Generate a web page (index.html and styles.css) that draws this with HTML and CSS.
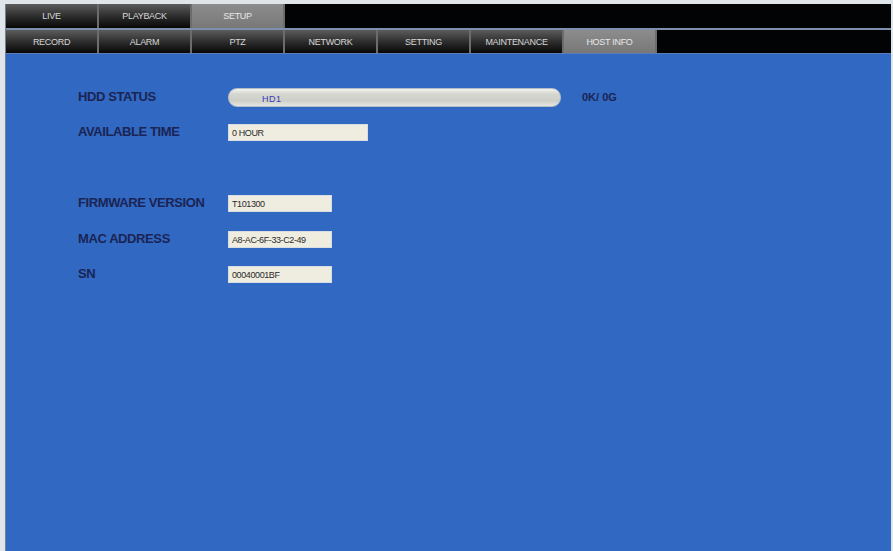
FILE: index.html
```html
<!DOCTYPE html>
<html>
<head>
<meta charset="utf-8">
<title>Host Info</title>
<link rel="stylesheet" href="styles.css">
</head>
<body>
<div class="frame">
  <div class="tabbar">
    <div class="tab">LIVE</div>
    <div class="tab">PLAYBACK</div>
    <div class="tab active">SETUP</div>
  </div>
  <div class="tabsep"></div>
  <div class="tabbar sub">
    <div class="tab">RECORD</div>
    <div class="tab">ALARM</div>
    <div class="tab">PTZ</div>
    <div class="tab">NETWORK</div>
    <div class="tab">SETTING</div>
    <div class="tab">MAINTENANCE</div>
    <div class="tab active">HOST INFO</div>
  </div>
  <div class="content">
    <div class="row r-hdd">
      <div class="label">HDD STATUS</div>
      <div class="hddbar"><span class="hddname">HD1</span></div>
      <div class="cap">0K/ 0G</div>
    </div>
    <div class="row r-avail">
      <div class="label">AVAILABLE TIME</div>
      <div class="field wide">0 HOUR</div>
    </div>
    <div class="row r-fw">
      <div class="label">FIRMWARE VERSION</div>
      <div class="field">T101300</div>
    </div>
    <div class="row r-mac">
      <div class="label">MAC ADDRESS</div>
      <div class="field">A8-AC-6F-33-C2-49</div>
    </div>
    <div class="row r-sn">
      <div class="label">SN</div>
      <div class="field">00040001BF</div>
    </div>
  </div>
</div>
</body>
</html>
```
FILE: styles.css
```css
html, body {
  margin: 0;
  padding: 0;
  background: #dfe5e8;
  font-family: "Liberation Sans", Arial, sans-serif;
}
.frame {
  margin: 4px 0 0 5px;
  width: 886px;
  height: 547px;
  background: #3068c2;
  border-left: 1px solid #6f8296;
  display: flex;
  flex-direction: column;
  box-sizing: border-box;
}
.tabbar {
  display: flex;
  height: 24px;
  background: #020305;
}
.tabbar.sub {
  height: 23px;
  border-bottom: 1px solid #5a7fb8;
}
.tabsep {
  height: 2px;
  background: #7d90b0;
}
.tab {
  width: 91px;
  border-right: 2px solid #6c6c6c;
  background: linear-gradient(#5c5c5c, #2a2a2a 55%, #070707);
  color: #d6d6d6;
  font-size: 9px;
  letter-spacing: -0.3px;
  display: flex;
  align-items: center;
  justify-content: center;
}
.tab.active {
  background: linear-gradient(#8c8c8c, #787878);
  color: #e8e8e8;
}
.content {
  flex: 1;
  padding: 34px 0 0 72px;
  display: flex;
  flex-direction: column;
}
.row {
  display: flex;
  align-items: center;
}
.label {
  width: 150px;
  font-size: 13px;
  font-weight: bold;
  color: #1b2452;
  letter-spacing: -0.4px;
}
.r-hdd { height: 19px; }
.r-hdd .label { margin-top: -3px; }
.r-avail { height: 17px; margin-top: 17px; }
.r-avail .label { margin-top: -3px; }
.r-fw { height: 17px; margin-top: 54px; }
.r-mac { height: 17px; margin-top: 19px; }
.r-sn { height: 17px; margin-top: 18px; }
.r-fw .label, .r-mac .label, .r-sn .label { margin-top: -2px; }
.hddbar {
  width: 333px;
  height: 19px;
  box-sizing: border-box;
  border-radius: 9px;
  background: linear-gradient(#f2f2ee, #d6d6d0 30%, #cfcfc9 70%, #e6e6e2);
  border: 1px solid #b4bcc8;
  display: flex;
  align-items: center;
}
.hddname {
  margin: 3px 0 0 33px;
  font-size: 9px;
  color: #3a3ab8;
  letter-spacing: 0.5px;
}
.cap {
  margin-left: 21px;
  margin-top: -2px;
  font-size: 11px;
  font-weight: bold;
  color: #1b2452;
}
.field {
  width: 104px;
  height: 17px;
  box-sizing: border-box;
  background: #efede0;
  border: 1px solid #d8dde4;
  font-size: 9px;
  color: #2a2a2a;
  padding-left: 3px;
  display: flex;
  align-items: center;
  letter-spacing: -0.4px;
}
.field.wide {
  width: 140px;
}
```
